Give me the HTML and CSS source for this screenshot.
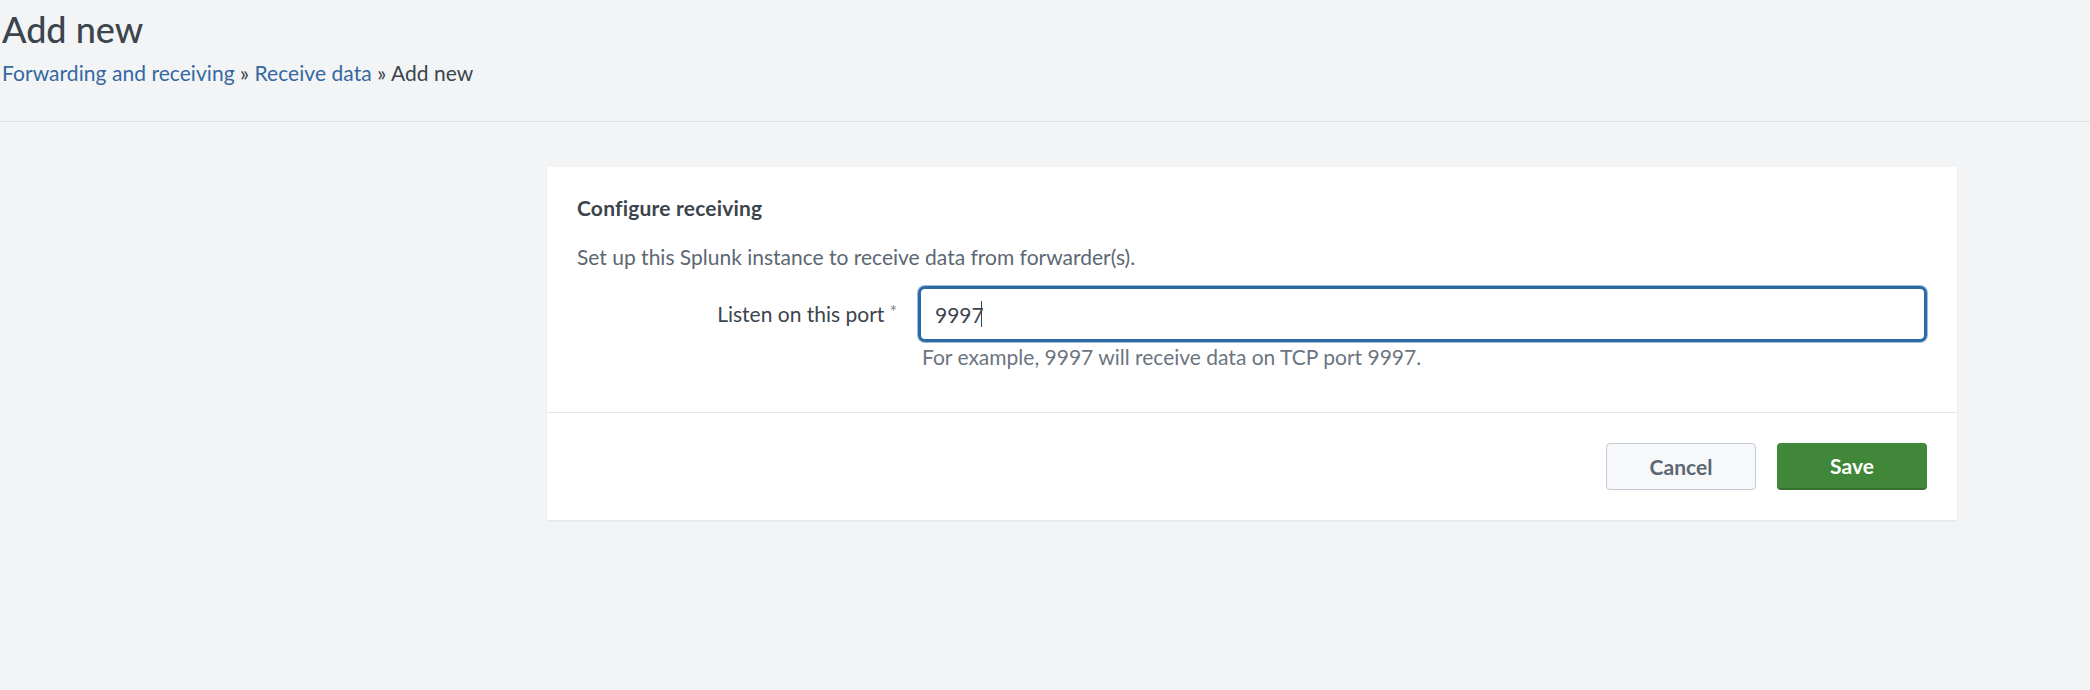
FILE: index.html
```html
<!DOCTYPE html>
<html lang="en">
<head>
    <meta charset="UTF-8">
    <meta name="viewport" content="width=device-width, initial-scale=1.0">
    <title>Add new - Receive data</title>
    <link rel="stylesheet" href="styles.css">
</head>
<body>
    <header class="page-header">
        <h1 class="page-title">Add new</h1>
        <div class="breadcrumb">
            <a href="#">Forwarding and receiving</a> &raquo; <a href="#">Receive data</a> &raquo; Add new
        </div>
    </header>

    <main class="page-body">
        <form class="panel">
            <div class="panel-body">
                <h2 class="panel-title">Configure receiving</h2>
                <p class="panel-desc">Set up this Splunk instance to receive data from forwarder(s).</p>

                <div class="form-row">
                    <label for="port" class="form-label">Listen on this port <span class="required">*</span></label>
                    <div class="form-field">
                        <div class="text-input is-focused">
                            <input type="text" id="port" name="port" value="9997">
                            <span class="caret"></span>
                        </div>
                        <div class="help-text">For example, 9997 will receive data on TCP port 9997.</div>
                    </div>
                </div>
            </div>

            <div class="panel-footer">
                <button type="button" class="btn btn-default">Cancel</button>
                <button type="submit" class="btn btn-primary">Save</button>
            </div>
        </form>
    </main>
</body>
</html>
```

FILE: styles.css
```css
* {
    margin: 0;
    padding: 0;
    box-sizing: border-box;
}

body {
    font-family: 'Lato', 'Noto Sans', sans-serif;
    font-size: 21px;
    line-height: 30px;
    color: #3c444d;
    background: #f3f4f6;
    height: 100vh;
    overflow: hidden;
}

a {
    color: #35689f;
    text-decoration: none;
}

.page-header {
    padding: 8px 2px 33px;
    border-bottom: 1px solid #e0e2e5;
}

.page-title {
    font-size: 36px;
    font-weight: 500;
    line-height: 43px;
    color: #3c444d;
    margin-bottom: 7px;
}

.breadcrumb {
    color: #3c444d;
    letter-spacing: 0.05px;
}

.page-body {
    padding: 45px 133px 0 547px;
}

.panel {
    background: #fff;
    box-shadow: 0 1px 2px rgba(0, 0, 0, 0.08);
}

.panel-body {
    padding: 26px 30px 40px;
    border-bottom: 1px solid #e1e6eb;
}

.panel-title {
    font-size: 21px;
    font-weight: 700;
    color: #3c444d;
    letter-spacing: 0.2px;
    margin-bottom: 19px;
}

.panel-desc {
    color: #5c6773;
    margin-bottom: 14px;
}

.form-row {
    display: grid;
    grid-template-columns: 320px 1fr;
    column-gap: 21px;
}

.form-label {
    text-align: right;
    padding-top: 13px;
    color: #3c444d;
}

.required {
    color: #7d7f82;
    font-size: 17px;
    vertical-align: top;
    position: relative;
    top: -2px;
}

.text-input {
    position: relative;
    height: 56px;
    border: 3px solid #2c6aa5;
    border-radius: 7px;
    box-shadow: 0 0 0 1px rgba(44, 106, 165, 0.45);
    background: #fff;
}

.text-input input {
    width: 100%;
    height: 100%;
    border: none;
    outline: none;
    background: transparent;
    padding: 0 14px;
    font-family: inherit;
    font-size: 21px;
    color: #3c444d;
}

.caret {
    position: absolute;
    left: 60px;
    top: 12px;
    width: 1px;
    height: 26px;
    background: #3c444d;
}

.help-text {
    color: #6b7580;
    padding-left: 4px;
}

.panel-footer {
    display: flex;
    justify-content: flex-end;
    gap: 21px;
    padding: 30px;
}

.btn {
    width: 150px;
    height: 47px;
    border-radius: 4px;
    font-family: inherit;
    font-size: 21px;
    cursor: pointer;
}

.btn-default {
    background: #f7f8fa;
    border: 1px solid #c3cbd4;
    color: #5c6773;
    font-weight: 700;
}

.btn-primary {
    background: #41873a;
    border: none;
    border-bottom: 2px solid #35722f;
    color: #fff;
    font-weight: 700;
}
```
